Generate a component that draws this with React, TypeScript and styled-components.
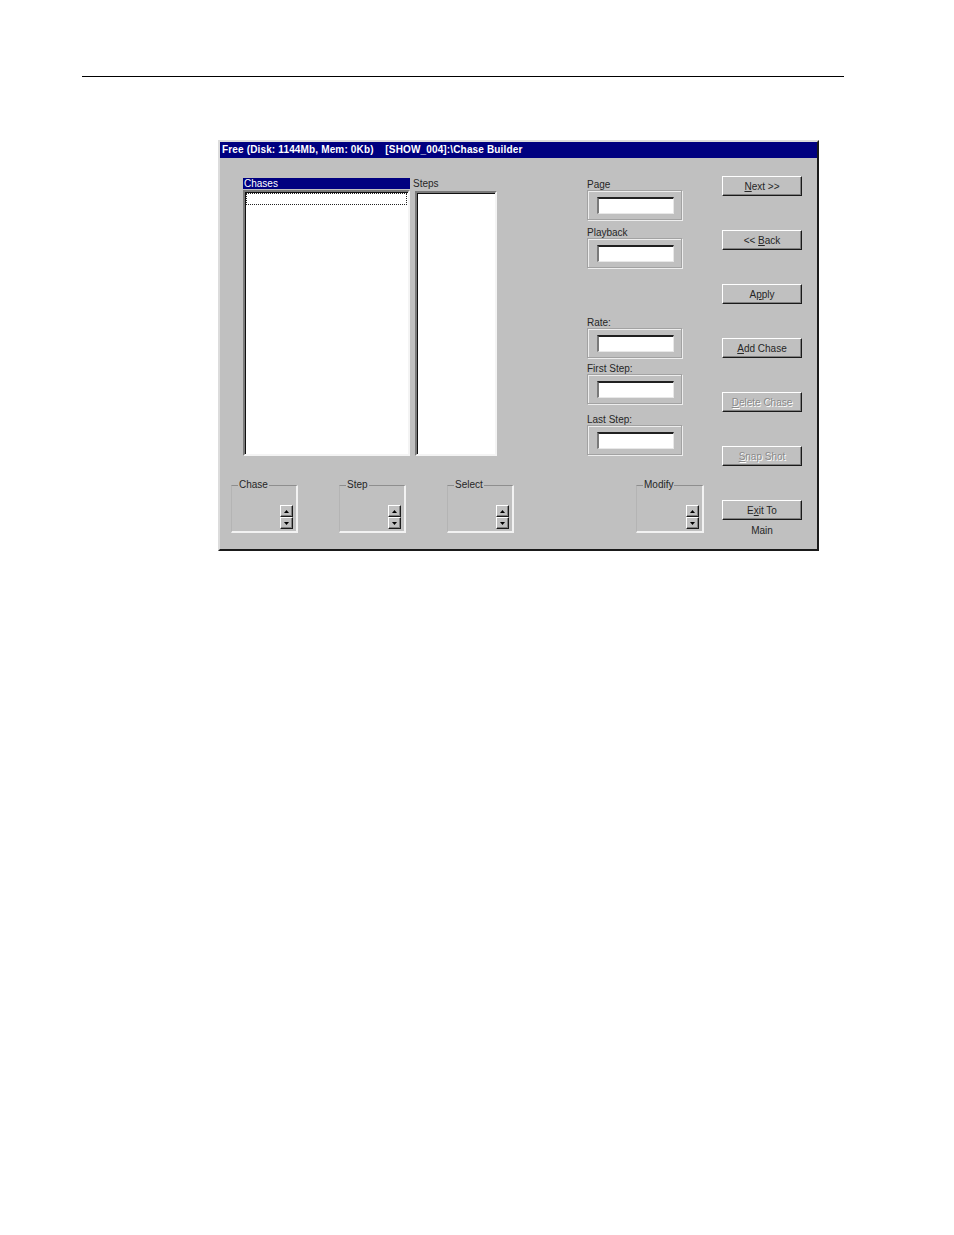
import React from "react";
import styled, { createGlobalStyle } from "styled-components";

const Global = createGlobalStyle`
  html, body { margin: 0; padding: 0; background: #fff; }
  body { font-family: "Liberation Sans", Arial, sans-serif; }
`;

const Page = styled.div`
  width: 954px;
  height: 1235px;
  background: #fff;
  overflow: hidden;
  display: flex;
  flex-direction: column;
`;

const Rule = styled.div`
  margin: 76px 0 0 82px;
  width: 762px;
  height: 1px;
  background: #000;
`;

const Window = styled.div`
  margin: 63px 0 0 218px;
  width: 601px;
  height: 411px;
  box-sizing: border-box;
  background: #c0c0c0;
  border-style: solid;
  border-width: 2px;
  border-color: #dcdcdc #1a1a1a #1a1a1a #dcdcdc;
  display: flex;
  flex-direction: column;
`;

const TitleBar = styled.div`
  height: 16px;
  flex: none;
  background: #000080;
  color: #fff;
  font-size: 10px;
  font-weight: bold;
  letter-spacing: 0.15px;
  line-height: 16px;
  padding-left: 2px;
  white-space: pre;
`;

const Body = styled.div`
  flex: 1;
  display: flex;
  flex-direction: row;
  color: #262626;
  font-size: 10px;
`;

const LeftPane = styled.div`
  width: 367px;
  flex: none;
  display: flex;
  flex-direction: column;
`;

const ListsRow = styled.div`
  margin: 20px 0 0 23px;
  display: flex;
  align-items: flex-start;
`;

const ListColumn = styled.div<{ $w: number; $ml?: number }>`
  width: ${(p) => p.$w}px;
  margin-left: ${(p) => p.$ml ?? 0}px;
  display: flex;
  flex-direction: column;
`;

const HeaderBar = styled.div<{ $active?: boolean }>`
  height: 11px;
  line-height: 11px;
  padding-left: 1px;
  background: ${(p) => (p.$active ? "#000080" : "transparent")};
  color: ${(p) => (p.$active ? "#fff" : "#262626")};
  white-space: nowrap;
`;

const ListBox = styled.div<{ $h: number; $mt: number; $ml?: number; $w?: number }>`
  box-sizing: border-box;
  height: ${(p) => p.$h}px;
  margin-top: ${(p) => p.$mt}px;
  margin-left: ${(p) => p.$ml ?? 0}px;
  ${(p) => (p.$w ? `width: ${p.$w}px;` : "")}
  background: #fff;
  border-style: solid;
  border-width: 2px;
  border-color: #7a7a7a #f4f4f4 #f4f4f4 #7a7a7a;
  box-shadow: inset 1px 1px 0 #111;
  padding: 1px 1px 0 1px;
`;

const FocusRow = styled.div`
  height: 12px;
  box-sizing: border-box;
  border: 1px dotted #222;
`;

const GroupsRow = styled.div<{ $ml: number; $mt: number }>`
  margin: ${(p) => p.$mt}px 0 0 ${(p) => p.$ml}px;
  display: flex;
  gap: 41px;
`;

const GroupBox = styled.fieldset<{ $w: number }>`
  box-sizing: border-box;
  width: ${(p) => p.$w}px;
  height: 53px;
  margin: 0;
  padding: 0 3px 0 0;
  min-inline-size: 0;
  border-style: solid;
  border-width: 1px 2px 2px 1px;
  border-color: #8e8e8e #f2f2f2 #f2f2f2 #b4b4b4;
  display: flex;
  justify-content: flex-end;
  align-items: flex-start;
`;

const GroupTitle = styled.legend`
  font-size: 10px;
  line-height: 10px;
  padding: 0 1px;
  margin-left: 6px;
  color: #262626;
`;

const Spinner = styled.div`
  margin-top: 15px;
  display: flex;
  flex-direction: column;
`;

const SpinBtn = styled.div`
  box-sizing: border-box;
  width: 13px;
  height: 12px;
  background: #c0c0c0;
  border-style: solid;
  border-width: 1px;
  border-color: #fff #1a1a1a #1a1a1a #fff;
  box-shadow: inset -1px -1px 0 #808080;
  display: flex;
  align-items: center;
  justify-content: center;
`;

const MidPane = styled.div`
  width: 135px;
  flex: none;
  display: flex;
  flex-direction: column;
  padding-top: 21px;
`;

const Field = styled.div<{ $mt: number }>`
  margin-top: ${(p) => p.$mt}px;
  display: flex;
  flex-direction: column;
  width: 95px;
`;

const FieldLabel = styled.div`
  height: 11px;
  line-height: 11px;
  white-space: nowrap;
`;

const FieldFrame = styled.div`
  box-sizing: border-box;
  height: 30px;
  width: 95px;
  border: 1px solid #a2a2a2;
  box-shadow: inset 1px 1px 0 #ededed, 1px 1px 0 #ededed;
  padding: 6px 0 0 9px;
`;

const TextInput = styled.div`
  box-sizing: border-box;
  width: 77px;
  height: 17px;
  background: #fff;
  border-style: solid;
  border-width: 2px 1px 1px 2px;
  border-color: #202020 #e8e8e8 #e8e8e8 #7a7a7a;
`;

const RightPane = styled.div`
  width: 80px;
  flex: none;
  padding-top: 18px;
  display: flex;
  flex-direction: column;
  gap: 34px;
`;

const ButtonStack = styled.div`
  display: flex;
  flex-direction: column;
  align-items: center;
`;

const WinButton = styled.div<{ $disabled?: boolean }>`
  box-sizing: border-box;
  width: 80px;
  height: 20px;
  background: #c0c0c0;
  border-style: solid;
  border-width: 1px;
  border-color: #fff #1a1a1a #1a1a1a #fff;
  box-shadow: inset -1px -1px 0 #808080;
  display: flex;
  align-items: center;
  justify-content: center;
  font-size: 10px;
  color: ${(p) => (p.$disabled ? "#8a8a8a" : "#262626")};
  text-shadow: ${(p) => (p.$disabled ? "1px 1px 0 #fff" : "none")};
  white-space: pre;
`;

const SubCaption = styled.div`
  margin-top: 5px;
  font-size: 10px;
  line-height: 12px;
`;

const Acc = styled.span`
  text-decoration: underline;
`;

const Arrow = ({ up }: { up?: boolean }) => (
  <svg width="5" height="3" viewBox="0 0 5 3">
    <polygon points={up ? "2.5,0 5,3 0,3" : "0,0 5,0 2.5,3"} fill="#000" />
  </svg>
);

const Spin = () => (
  <Spinner>
    <SpinBtn>
      <Arrow up />
    </SpinBtn>
    <SpinBtn>
      <Arrow />
    </SpinBtn>
  </Spinner>
);

const fields: { label: string; mt: number }[] = [
  { label: "Page", mt: 0 },
  { label: "Playback", mt: 7 },
  { label: "Rate:", mt: 49 },
  { label: "First Step:", mt: 5 },
  { label: "Last Step:", mt: 10 },
];

export default function App() {
  return (
    <Page>
      <Global />
      <Rule />
      <Window>
        <TitleBar>{"Free (Disk: 1144Mb, Mem: 0Kb)    [SHOW_004]:\\Chase Builder"}</TitleBar>
        <Body>
          <LeftPane>
            <ListsRow>
              <ListColumn $w={167}>
                <HeaderBar $active>Chases</HeaderBar>
                <ListBox $h={266} $mt={1}>
                  <FocusRow />
                </ListBox>
              </ListColumn>
              <ListColumn $w={85} $ml={2}>
                <HeaderBar>Steps</HeaderBar>
                <ListBox $h={265} $mt={2} $ml={3} $w={82} />
              </ListColumn>
            </ListsRow>
            <GroupsRow $ml={11} $mt={24}>
              {["Chase", "Step", "Select"].map((t) => (
                <GroupBox key={t} $w={67}>
                  <GroupTitle>{t}</GroupTitle>
                  <Spin />
                </GroupBox>
              ))}
            </GroupsRow>
          </LeftPane>
          <MidPane>
            {fields.map((f) => (
              <Field key={f.label} $mt={f.mt}>
                <FieldLabel>{f.label}</FieldLabel>
                <FieldFrame>
                  <TextInput />
                </FieldFrame>
              </Field>
            ))}
            <GroupsRow $ml={49} $mt={25}>
              <GroupBox $w={68}>
                <GroupTitle>Modify</GroupTitle>
                <Spin />
              </GroupBox>
            </GroupsRow>
          </MidPane>
          <RightPane>
            <WinButton>
              <Acc>N</Acc>ext &gt;&gt;
            </WinButton>
            <WinButton>
              &lt;&lt; <Acc>B</Acc>ack
            </WinButton>
            <WinButton>
              A<Acc>p</Acc>ply
            </WinButton>
            <WinButton>
              <Acc>A</Acc>dd Chase
            </WinButton>
            <WinButton $disabled>
              <Acc>D</Acc>elete Chase
            </WinButton>
            <WinButton $disabled>
              <Acc>S</Acc>nap Shot
            </WinButton>
            <ButtonStack>
              <WinButton>
                E<Acc>x</Acc>it To
              </WinButton>
              <SubCaption>Main</SubCaption>
            </ButtonStack>
          </RightPane>
        </Body>
      </Window>
    </Page>
  );
}
